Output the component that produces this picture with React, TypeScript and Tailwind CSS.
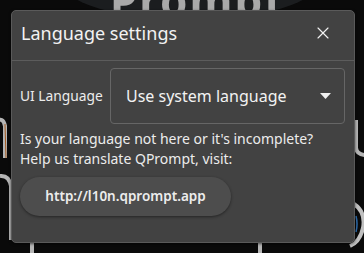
import { X } from 'lucide-react'

function Backdrop() {
  // blurred QPrompt canvas behind the dialog
  return (
    <svg className="absolute inset-0" width="364" height="253" viewBox="0 0 364 253">
      <rect width="364" height="253" fill="#0a0a0a" />
      <ellipse cx="190" cy="-20" rx="130" ry="40" fill="#1b1d1f" />
      <path d="M-4 122 Q3 116 5 126 L5 158" stroke="#b5b5b5" strokeWidth="4" fill="none" />
      <path d="M5 124 L6 158" stroke="#a55a1e" strokeWidth="1" fill="none" />
      <path d="M0 176 Q9 175 11 186 L11 240" stroke="#b5b5b5" strokeWidth="4" fill="none" />
      <path d="M13 186 L13 238" stroke="#2f6fb0" strokeWidth="1" fill="none" />
      <path d="M32 240 L32 253" stroke="#b5b5b5" strokeWidth="4" />
      <path d="M260 240 L260 253" stroke="#b5b5b5" strokeWidth="4" />
      <path d="M356 120 L356 148 Q357 155 366 155" stroke="#b5b5b5" strokeWidth="4" fill="none" />
      <path d="M354 120 L354 146" stroke="#a55a1e" strokeWidth="1" fill="none" />
      <path d="M354 204 Q366 212 363 228 Q360 242 350 246" stroke="#c0c0c0" strokeWidth="4" fill="none" />
      <path d="M356 216 Q358 224 356 232" stroke="#2f6fb0" strokeWidth="1.5" fill="none" />
    </svg>
  )
}

export default function App() {
  return (
    <div
      className="relative h-[253px] w-[364px] overflow-hidden bg-[#0a0a0a]"
      style={{ fontFamily: '"Noto Sans", "Open Sans", sans-serif' }}
    >
      <Backdrop />
      {/* logo text peeking above the dialog */}
      <div className="absolute left-[100px] top-0 h-[10px] w-[200px] overflow-hidden">
        <div className="mt-[-22px] pl-[10px] text-[44px] font-bold leading-none tracking-[2px] text-[#a9a9a9] blur-[0.5px]">
          Prompt
        </div>
      </div>

      <div className="relative ml-[11px] mt-[10px] flex h-[233px] w-[344px] flex-col rounded-[5px] border border-[#5a5a5a] bg-[#424242] shadow-[0_1px_3px_rgba(0,0,0,0.6)]">
        {/* Header */}
        <div className="flex h-[49px] items-start justify-between pl-[9px] pr-[21px] pt-[10px]">
          <span className="text-[18px] leading-[24px] text-[#f2f2f2]">Language settings</span>
          <X className="mt-[2px] h-[20px] w-[20px] text-[#f0f0f0]" strokeWidth={1.4} />
        </div>
        <div className="h-px bg-[#5c5c5c]" />

        {/* Language row */}
        <div className="mt-[7px] flex items-center pl-[8px] pr-[9px]">
          <span className="w-[90px] text-[13.8px] text-[#ececec]">UI Language</span>
          <div className="flex h-[56px] flex-1 items-center justify-between rounded-[4px] border border-[#666] pl-[15px] pr-[13px]">
            <span className="text-[16px] text-[#f2f2f2]">Use system language</span>
            <svg width="11" height="6" viewBox="0 0 11 6">
              <path d="M0 0 L11 0 L5.5 6 Z" fill="#f0f0f0" />
            </svg>
          </div>
        </div>

        {/* Help text */}
        <div className="mt-[5px] pl-[8px] text-[14px] leading-[20px] text-[#ececec]">
          <p>Is your language not here or it's incomplete?</p>
          <p>Help us translate QPrompt, visit:</p>
        </div>

        <div className="mt-[8px] pl-[8px]">
          <button className="h-[39px] w-[211px] rounded-full bg-[#4d4d4d] text-[13.5px] font-semibold text-[#ececec] shadow-[0_1px_3px_rgba(0,0,0,0.45)]">
            http://l10n.qprompt.app
          </button>
        </div>
      </div>
    </div>
  )
}
